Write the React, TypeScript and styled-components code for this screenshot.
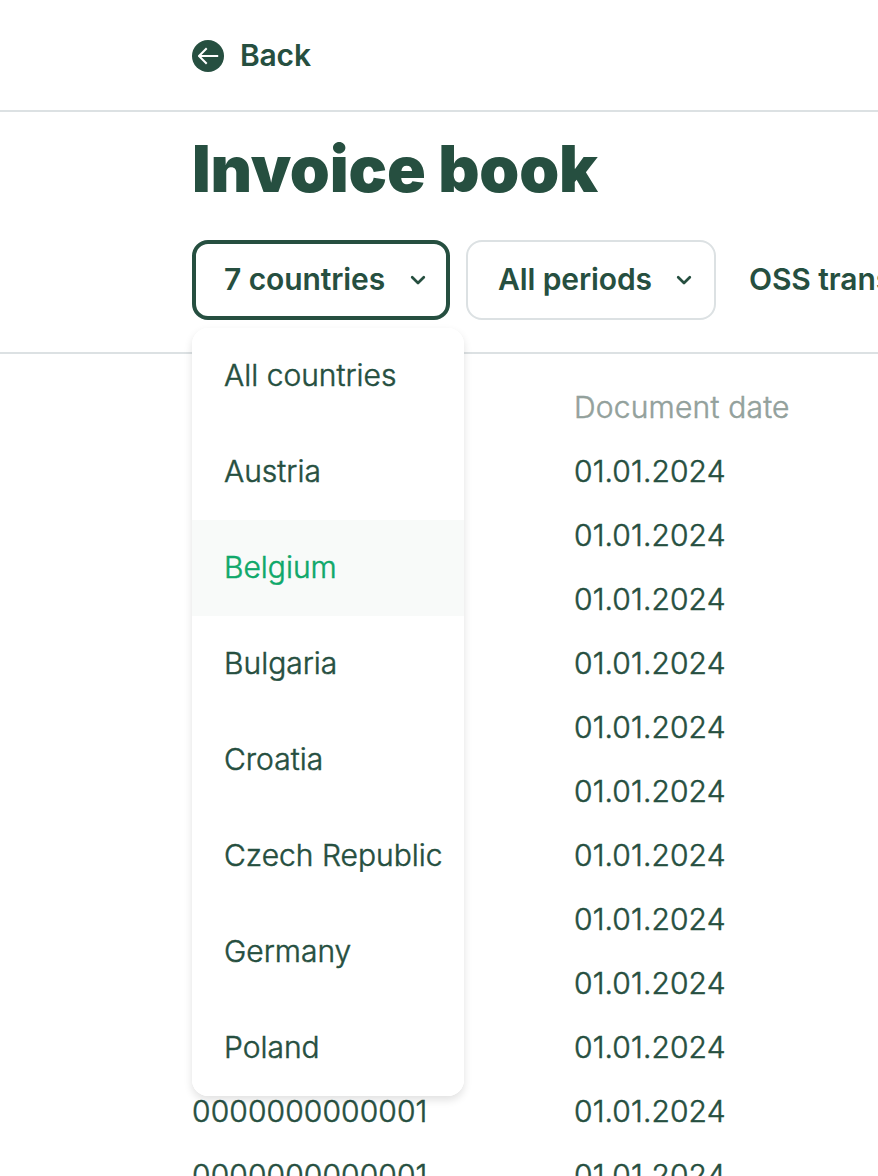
import React from "react";
import styled, { createGlobalStyle } from "styled-components";

const Global = createGlobalStyle`
  * { box-sizing: border-box; }
  html, body { margin: 0; }
  body { background: #fff; color: #264f40; font-family: Inter, "Liberation Sans", sans-serif; font-size: 30px; overflow: hidden; }
`;
const Page = styled.div`
  height: 1176px;
  width: 100%;
  overflow: hidden;
`;
const TopBar = styled.header`
  height: 112px;
  padding: 2px 0 0 192px;
  display: flex;
  align-items: center;
  border-bottom: 2px solid #dce1e3;
`;
const BackLink = styled.a`
  display: flex;
  align-items: center;
  gap: 16px;
  font-weight: 600;
  letter-spacing: -0.2px;
`;
const BackLabel = styled.span`
  line-height: 38px;
  padding-bottom: 2px;
`;
const Heading = styled.section`
  height: 242px;
  padding: 17px 0 0 192px;
  border-bottom: 2px solid #dce1e3;
`;
const Title = styled.h1`
  margin: 0 0 31px;
  font-size: 64px;
  line-height: 80px;
  font-weight: 900;
  letter-spacing: -0.15px;
  white-space: nowrap;
`;
const Filters = styled.div`
  display: flex;
  gap: 16px;
  white-space: nowrap;
`;
const FilterWrap = styled.div`
  position: relative;
  flex: none;
`;
const FilterButton = styled.button<{ $open?: boolean; $width: number }>`
  flex: none;
  width: ${(p) => p.$width}px;
  height: 80px;
  padding: 0 ${(p) => (p.$open ? 16 : 18)}px 0 ${(p) => (p.$open ? 28 : 30)}px;
  display: flex;
  align-items: center;
  justify-content: space-between;
  border: ${(p) => (p.$open ? "4px solid #264f40" : "2px solid #dce1e3")};
  border-radius: 16px;
  background: #fff;
  color: inherit;
  font: inherit;
  font-weight: 600;
  letter-spacing: -0.1px;
`;
const FilterLabel = styled.span`
  padding-bottom: 2px;
`;
const TextFilter = styled.div`
  flex: none;
  height: 80px;
  padding-left: 17px;
  line-height: 78px;
  font-weight: 600;
  letter-spacing: -0.1px;
`;
const Menu = styled.ul`
  position: absolute;
  top: 88px;
  left: 0;
  z-index: 1;
  width: 272px;
  margin: 0;
  padding: 0;
  list-style: none;
  border-radius: 16px;
  overflow: hidden;
  background: #fff;
  box-shadow: 0 4px 8px rgba(0, 0, 0, 0.12);
`;
const MenuItem = styled.li<{ $active?: boolean }>`
  height: 96px;
  padding-left: 32px;
  line-height: 94px;
  font-weight: 300;
  -webkit-text-stroke: 0.5px currentColor;
  background: ${(p) => (p.$active ? "#f8faf9" : "#fff")};
  color: ${(p) => (p.$active ? "#0fa86a" : "inherit")};
`;
const Table = styled.div`
  padding: 22px 0 0 192px;
`;
const Row = styled.div<{ $head?: boolean }>`
  display: grid;
  grid-template-columns: 382px 1fr;
  height: 64px;
  line-height: 62px;
  font-weight: 300;
  -webkit-text-stroke: 0.5px currentColor;
  letter-spacing: ${(p) => (p.$head ? "0.2px" : "0.1px")};
  color: ${(p) => (p.$head ? "#93a19c" : "inherit")};
`;

const Chevron = () => (
  <svg width="24" height="24" viewBox="0 0 24 24" fill="none" stroke="currentColor" strokeWidth="2.7" strokeLinecap="round" strokeLinejoin="round">
    <path d="M6.2 9.2l5.8 5.8 5.8-5.8" />
  </svg>
);

const countries = ["All countries", "Austria", "Belgium", "Bulgaria", "Croatia", "Czech Republic", "Germany", "Poland"];
const date = "01.01.2024";
const rows = [
  ...Array.from({ length: 10 }, () => ({ number: "", date })),
  { number: "0000000000001", date },
  { number: "0000000000001", date },
];

export default function App() {
  return (
    <Page>
      <Global />
      <TopBar>
        <BackLink>
          <svg width="32" height="32" viewBox="0 0 32 32" fill="none">
            <circle cx="16" cy="16" r="16" fill="#264f40" />
            <path d="M25.2 16H7.2M14 9l-7 7 7 7" stroke="#fff" strokeWidth="2" strokeLinecap="square" strokeLinejoin="round" />
          </svg>
          <BackLabel>Back</BackLabel>
        </BackLink>
      </TopBar>
      <Heading>
        <Title>Invoice book</Title>
        <Filters>
          <FilterWrap>
            <FilterButton $open $width={258}><FilterLabel>7 countries</FilterLabel><Chevron /></FilterButton>
            <Menu>
              {countries.map((c) => (
                <MenuItem key={c} $active={c === "Belgium"}>{c}</MenuItem>
              ))}
            </Menu>
          </FilterWrap>
          <FilterButton $width={250}><FilterLabel>All periods</FilterLabel><Chevron /></FilterButton>
          <TextFilter>OSS transactions</TextFilter>
        </Filters>
      </Heading>
      <Table>
        <Row $head><span /><span>Document date</span></Row>
        {rows.map((r, i) => (
          <Row key={i}><span>{r.number}</span><span>{r.date}</span></Row>
        ))}
      </Table>
    </Page>
  );
}
